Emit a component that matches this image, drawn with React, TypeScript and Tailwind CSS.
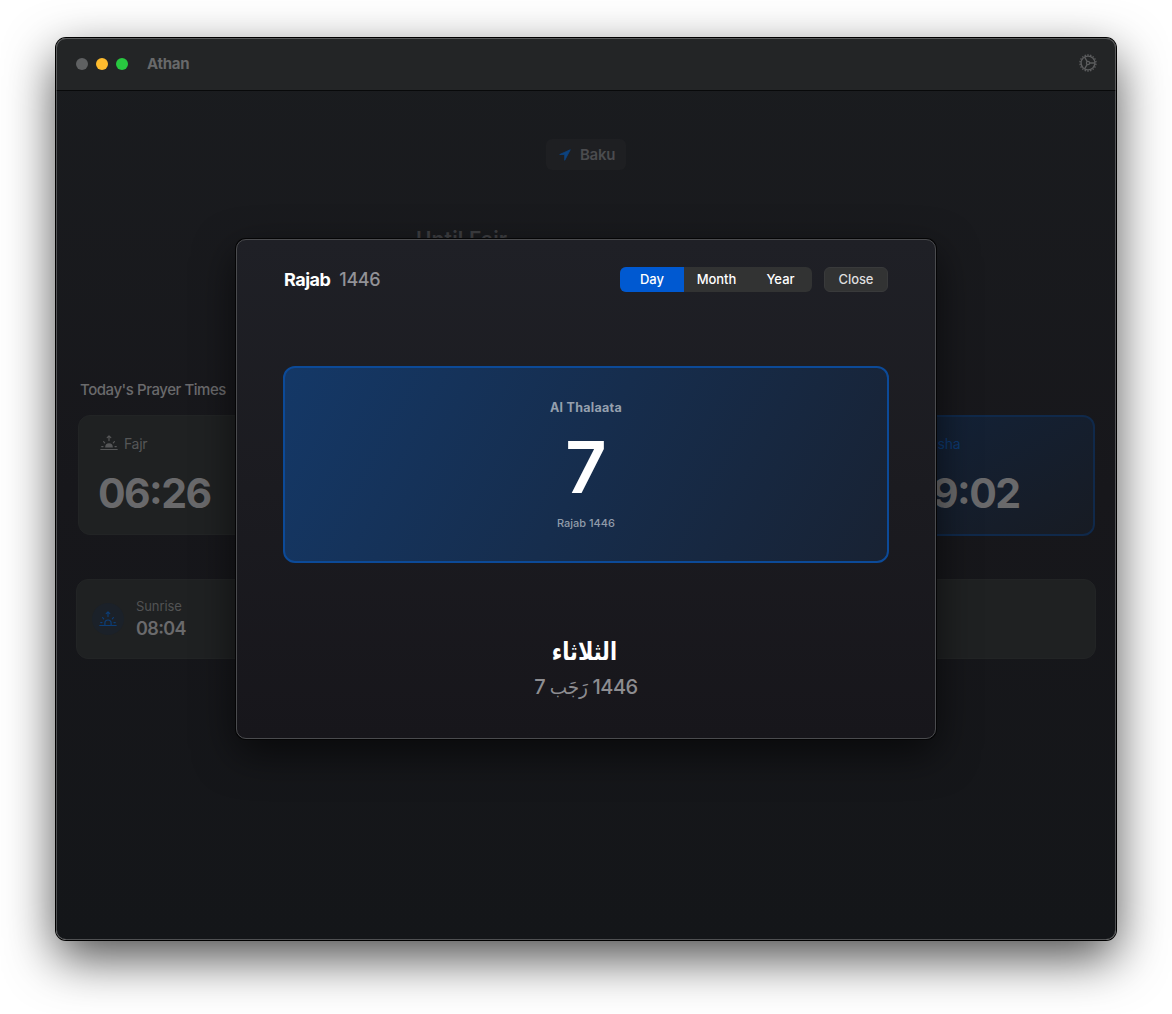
const TEETH = Array.from({ length: 18 }, (_, i) => i * 20);

function GearIcon() {
  return (
    <svg width="18" height="18" viewBox="0 0 18 18" fill="none" stroke="#5c5d5e">
      <circle cx="9" cy="9" r="6.9" strokeWidth="1.4" />
      {TEETH.map((a) => (
        <path key={a} d="M9 .3v1.4" strokeWidth="1.4" transform={`rotate(${a} 9 9)`} />
      ))}
      <circle cx="9" cy="9" r="1.6" strokeWidth="1.2" />
      <path d="M10.6 9h5.2M8.2 7.6 5.6 3.1M8.2 10.4l-2.6 4.5" strokeWidth="1.3" />
    </svg>
  );
}

function SunriseIcon({ filled = false }: { filled?: boolean }) {
  return (
    <svg
      width="18"
      height="16"
      viewBox="0 0 18 16"
      fill="none"
      stroke="currentColor"
      strokeWidth="1.2"
      strokeLinecap="round"
      strokeLinejoin="round"
    >
      <path d="M.8 14.5h16.4" />
      {filled ? (
        <path d="M5.2 12.6V12a3.8 3.8 0 0 1 7.6 0v.6z" fill="currentColor" stroke="none" />
      ) : (
        <path d="M5.9 14.3v-2.2a3.1 3.1 0 0 1 6.2 0v2.2" />
      )}
      <path d="M9 5.6V1.2M7.2 2.7 9 .9l1.8 1.8M3.6 6.7l1.1 1.1M14.4 6.7l-1.1 1.1M1.7 11.6h1.3M15 11.6h1.3" />
    </svg>
  );
}

function TitleBar() {
  return (
    <header className="flex h-[53px] shrink-0 items-center border-b border-[#08090a] bg-[#232526] pr-[19px] pl-5">
      <div className="flex gap-2">
        <span className="size-3 rounded-full bg-[#5f6162]" />
        <span className="size-3 rounded-full bg-[#febc2e]" />
        <span className="size-3 rounded-full bg-[#28c840]" />
      </div>
      <h1 className="ml-[19px] text-[15px] font-bold tracking-[-0.3px] text-[#68696a]">Athan</h1>
      <div className="ml-auto -mt-0.5">
        <GearIcon />
      </div>
    </header>
  );
}

function BigTime({ hours, minutes }: { hours: string; minutes: string }) {
  return (
    <p className="mt-[15px] text-[41px] leading-[50px] font-bold tracking-[-1.6px] text-[#69696b] [font-feature-settings:'case']">
      {hours}:{minutes}
    </p>
  );
}

function PrayerTimes() {
  return (
    <section className="mt-[123px] pr-[21px] pl-[22px]">
      <h2 className="pl-0.5 text-[15px] leading-6 font-medium tracking-[-0.45px] text-[#6a6a6c]">
        Today's Prayer Times
      </h2>
      <div className="mt-[13px] flex justify-between">
        <div className="h-[120px] w-[208px] rounded-xl border border-[#222425] bg-[#1f2122] px-[19px] pt-[17px]">
          <div className="flex h-5 items-center gap-1.5 pl-0.5 text-[#565758]">
            <SunriseIcon filled />
            <span className="text-[14px] tracking-[-0.3px]">Fajr</span>
          </div>
          <BigTime hours="06" minutes="26" />
        </div>
        <div className="h-[121px] w-[208px] rounded-xl border-2 border-[#10294a] bg-linear-to-br from-[#122239] to-[#171b23] px-[21px] pt-[16px]">
          <div className="flex h-5 items-center gap-1.5 text-[#0c3970]">
            <SunriseIcon filled />
            <span className="text-[14px] tracking-[-0.2px]">Isha</span>
          </div>
          <div className="pl-[6px]">
            <BigTime hours="19" minutes="02" />
          </div>
        </div>
      </div>
    </section>
  );
}

function SunriseCard() {
  return (
    <section className="mx-5 mt-[43px] flex h-[80px] items-center rounded-xl border border-[#222425] bg-[#1f2122] pl-[15px]">
      <div className="flex size-8 items-center justify-center rounded-full bg-[#1b2129] text-[#0c3e78]">
        <SunriseIcon />
      </div>
      <div className="ml-3">
        <p className="text-[13px] leading-[18px] tracking-[-0.1px] text-[#525354]">Sunrise</p>
        <p className="mt-0.5 text-[18px] leading-6 font-semibold tracking-[-0.6px] text-[#6a6a6c] [font-feature-settings:'case']">
          08:04
        </p>
      </div>
    </section>
  );
}

function CalendarSheet() {
  return (
    <div
      role="dialog"
      className="absolute top-[201px] left-[180px] flex h-[500px] w-[700px] flex-col rounded-[10px] border border-[#4a4b4e] bg-linear-to-b from-[#1f2026] via-[#1b1b20] to-[#17161b] px-[47px] pt-[26px] shadow-[0_0_0_1px_#050506,0_14px_40px_rgba(0,0,0,0.6)]"
    >
      <div className="flex h-[26px] items-center">
        <h2 className="text-[18px] font-bold tracking-[-0.5px] text-white">Rajab</h2>
        <span className="ml-[9px] text-[18px] font-medium tracking-[-0.4px] text-[#929297]">1446</span>
        <div className="ml-auto grid h-[25px] w-[192px] grid-cols-3 overflow-hidden rounded-md bg-[#323333] text-[13px] font-medium text-white">
          <button className="bg-[#0059d1] pt-px">Day</button>
          <button className="pt-px pl-px tracking-[-0.1px]">Month</button>
          <button className="pt-px pl-px">Year</button>
        </div>
        <button className="ml-3 h-[25px] w-16 rounded-md border border-[#393a3b] bg-[#323333] pt-px text-[13px] font-medium tracking-[-0.1px] text-[#dededf]">
          Close
        </button>
      </div>

      <div className="-mx-px mt-[74px] flex h-[197px] flex-col items-center rounded-xl border-2 border-[#0c4a98] bg-linear-[118deg] from-[#143867] via-[#162d4d] to-[#182233] pt-[32px]">
        <p className="text-[12.5px] leading-4 font-bold tracking-[0.3px] text-[#95a0ae]">Al Thalaata</p>
        <p className="mt-[9px] text-[72px] leading-[84px] font-semibold text-white">7</p>
        <p className="mt-[6px] text-[11px] leading-4 font-medium text-[#919caa]">Rajab 1446</p>
      </div>

      <div className="mt-[70px] flex flex-col items-center font-['Inter','DejaVu_Sans',sans-serif]">
        <p lang="ar" className="mr-[3px] scale-x-[0.83] text-[25px] leading-9 font-bold text-white">
          الثلاثاء
        </p>
        <p className="text-[20px] leading-9 font-medium tracking-[-0.5px] text-[#8d8d91]">
          7{" "}
          <bdi lang="ar" className="-mx-0.5 inline-block scale-x-[0.92] tracking-normal">
            رَجَب
          </bdi>{" "}
          1446
        </p>
      </div>
    </div>
  );
}

export default function App() {
  return (
    <div className="h-[1014px] w-full overflow-hidden bg-white px-14 pt-[38px] font-['Inter',sans-serif]">
      <div className="relative h-[902px] w-[1060px] rounded-[10px] shadow-[0_0_0_1px_#000,0_18px_50px_rgba(0,0,0,0.7)]">
        <div className="flex h-full flex-col overflow-hidden rounded-[10px] bg-linear-to-b from-[#1a1c1f] via-[#17171b] to-[#141619]">
          <TitleBar />
          <div className="mt-12 flex h-[31px] w-20 items-center self-center rounded-md bg-[#1e1f22] pl-[13px]">
            <svg width="12" height="12" viewBox="0 0 12 12" fill="#0c427f" stroke="#0c427f" strokeLinejoin="round">
              <path d="M11.3.7.7 5.5h5v5.8z" strokeWidth=".8" />
            </svg>
            <span className="ml-[9px] pt-0.5 text-[15px] font-semibold tracking-[-0.3px] text-[#4b4c4f]">Baku</span>
          </div>
          <p className="mt-[55px] ml-[360px] text-[21px] leading-[30px] font-semibold tracking-[0.15px] text-[#3d3e41]">
            Until Fajr
          </p>
          <PrayerTimes />
          <SunriseCard />
        </div>
        <CalendarSheet />
        <div className="pointer-events-none absolute inset-0 rounded-[10px] border border-white/25" />
      </div>
    </div>
  );
}
